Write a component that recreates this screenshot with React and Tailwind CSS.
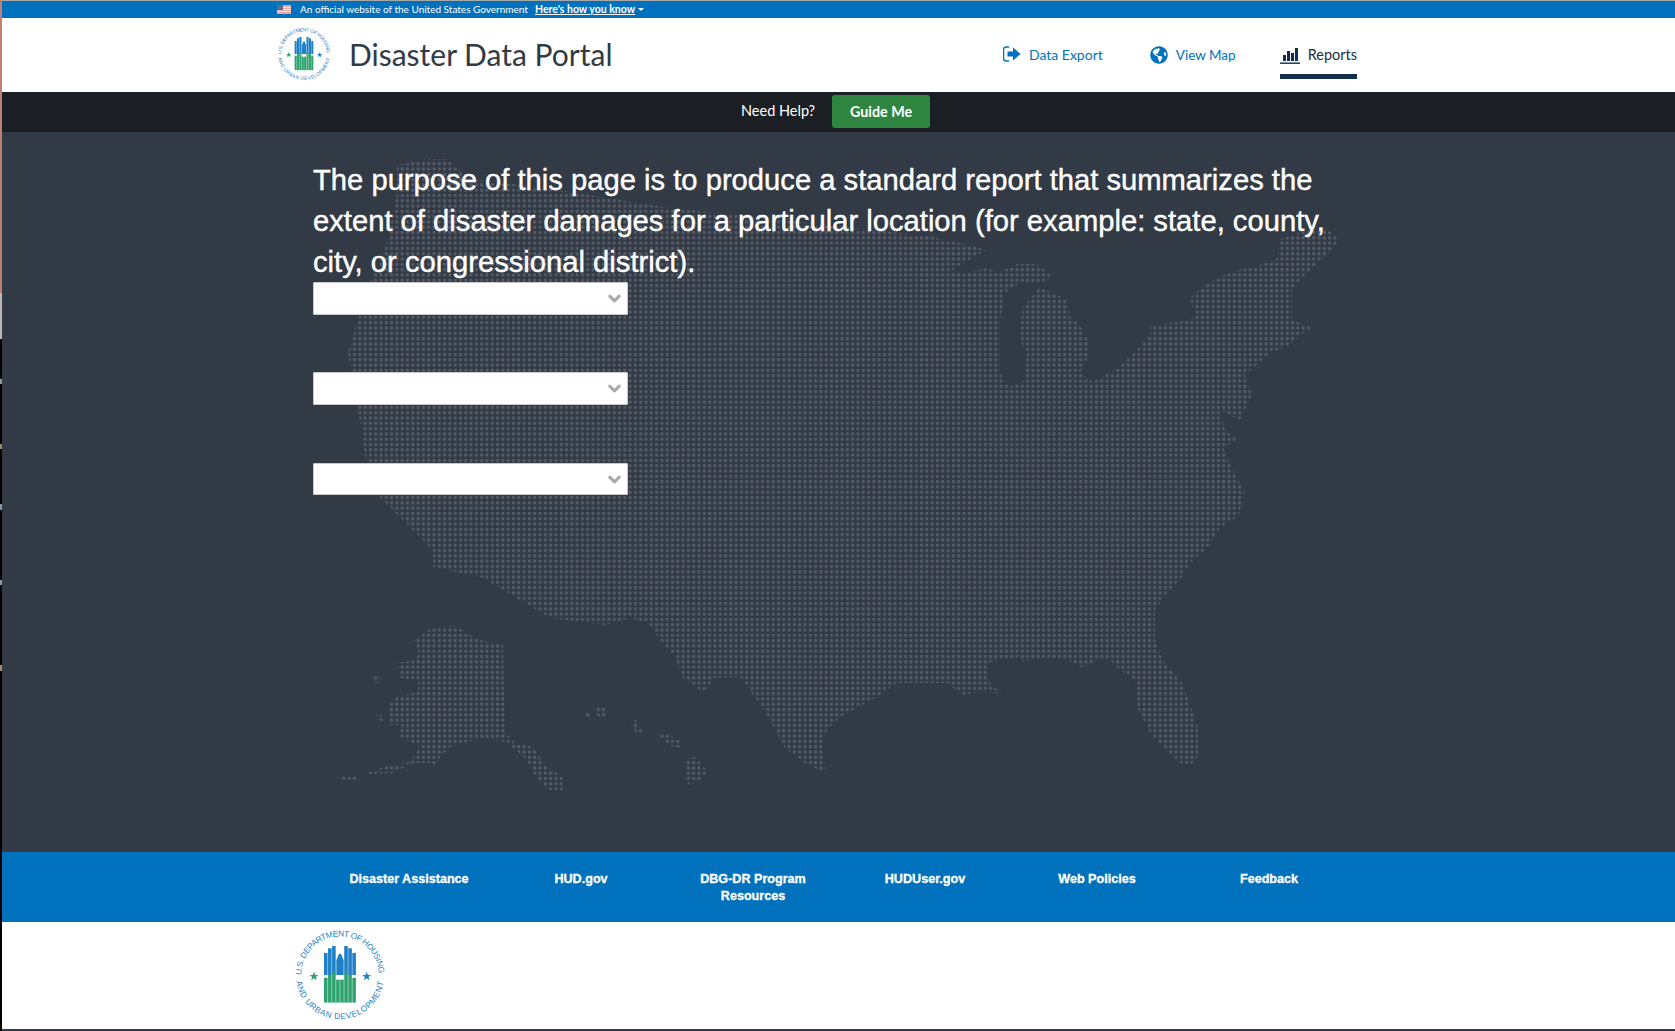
import React from 'react';
import { ChevronDown } from 'lucide-react';
import { FaGlobeAmericas } from 'react-icons/fa';

const footerLinks = [
  ['Disaster Assistance'],
  ['HUD.gov'],
  ['DBG-DR Program', 'Resources'],
  ['HUDUser.gov'],
  ['Web Policies'],
  ['Feedback'],
];

// outline of the dotted map, in page coordinates
const usOutline =
  'M397 165 L430 159 L447 159 L460 170 L472 179 L560 190 L663 207 L800 222 L929 236 L945 240 L960 243 L987 250 L965 262 L950 272 L965 274 L985 268 L1000 272 L1017 264 L1037 264 L1053 277 L1040 283 L1020 283 L1005 293 L1000 320 L1000 373 L1010 387 L1025 380 L1027 353 L1018 337 L1023 307 L1040 287 L1068 300 L1070 317 L1078 323 L1088 340 L1090 353 L1080 373 L1093 382 L1115 370 L1135 352 L1150 335 L1150 325 L1155 325 L1190 320 L1195 315 L1190 298 L1205 285 L1230 272 L1260 265 L1278 258 L1278 240 L1300 232 L1325 228 L1340 240 L1330 252 L1316 265 L1300 280 L1292 290 L1292 320 L1305 325 L1312 328 L1300 335 L1290 345 L1270 353 L1245 375 L1252 395 L1245 410 L1240 420 L1220 410 L1225 430 L1238 440 L1223 447 L1233 470 L1245 493 L1238 517 L1220 527 L1208 547 L1190 563 L1182 577 L1167 593 L1155 610 L1155 640 L1163 660 L1182 683 L1192 710 L1198 727 L1198 757 L1190 765 L1178 762 L1163 747 L1150 733 L1137 707 L1135 680 L1120 670 L1110 660 L1097 660 L1083 668 L1067 660 L1047 657 L1023 662 L1020 657 L990 662 L987 673 L992 687 L1002 690 L997 693 L977 692 L963 695 L955 690 L948 683 L920 683 L897 683 L877 697 L840 717 L827 730 L822 743 L826 773 L806 764 L785 748 L764 710 L740 677 L715 678 L703 693 L697 688 L682 677 L675 657 L660 640 L648 623 L630 618 L605 625 L550 618 L520 600 L503 590 L480 577 L433 567 L433 550 L400 517 L380 497 L365 457 L362 430 L357 407 L348 353 L358 320 L372 277 L387 243 L397 193 Z';
const alaskaOutline =
  'M428 630 L453 625 L465 632 L480 640 L503 645 L505 733 L515 743 L533 747 L547 767 L563 777 L563 790 L547 790 L533 773 L527 760 L507 742 L483 738 L467 742 L450 747 L440 757 L437 767 L430 763 L413 763 L393 773 L368 774 L368 772 L387 766 L410 762 L420 747 L407 740 L398 737 L402 725 L390 725 L387 707 L395 697 L418 692 L418 680 L400 678 L397 663 L417 660 L418 650 L413 640 Z';
const islandsOutline =
  'M340 775 L357 775 L357 780 L340 780 Z M371 675 L380 677 L380 684 L373 682 Z M376 714 L385 716 L385 722 L378 720 Z M586 713 L591 713 L591 718 L586 718 Z M597 708 L607 707 L607 716 L597 716 Z M630 722 L636 720 L643 733 L636 733 Z M656 734 L668 735 L681 740 L680 748 L670 746 Z M684 760 L695 757 L708 772 L700 780 L688 785 Z';

function UsMap() {
  return (
    <svg className="absolute top-0 -left-[2px] h-[720px] w-[1675px]" viewBox="0 132 1675 720">
      <defs>
        <pattern id="dots" x="3.2" y="3.1" width="5.3" height="5.3" patternUnits="userSpaceOnUse">
          <rect width="3" height="3" rx="0.6" fill="#555b66" />
        </pattern>
      </defs>
      <path d={usOutline} fill="url(#dots)" />
      <path d={alaskaOutline} fill="url(#dots)" />
      <path d={islandsOutline} fill="url(#dots)" />
    </svg>
  );
}

const blueBars = [
  [32.6, 26],
  [37, 21],
  [41.4, 18.5],
  [54.6, 18.5],
  [59, 21],
  [63.4, 26],
];
const greenBars = [
  [32.6, 53],
  [37, 50],
  [41.4, 47],
  [45.8, 55],
  [50.2, 55],
  [54.6, 47],
  [59, 50],
  [63.4, 53],
];

function HudLogo({ className, id }) {
  return (
    <svg className={className} viewBox="0 0 100 100">
      <defs>
        <path id={`${id}-top`} d="M8 50 A42 42 0 0 1 92 50" />
        <path id={`${id}-bottom`} d="M2 50 A48 48 0 0 0 98 50" />
      </defs>
      <g fill="#1f80c8" fontFamily="Liberation Sans, sans-serif" fontSize="9">
        <text>
          <textPath href={`#${id}-top`} textLength="130" lengthAdjust="spacing">
            U.S. DEPARTMENT OF HOUSING
          </textPath>
        </text>
        <text>
          <textPath href={`#${id}-bottom`} startOffset="7" textLength="136" lengthAdjust="spacing">
            AND URBAN DEVELOPMENT
          </textPath>
        </text>
      </g>
      {blueBars.map(([x, y]) => (
        <rect key={x} x={x} y={y} width="3.9" height={50 - y} fill="#1f80c8" />
      ))}
      <path d="M46 50 L46 34 L49 27 L51 27 L54 34 L54 50 Z" fill="#1f80c8" />
      {greenBars.map(([x, y]) => (
        <rect key={x} x={x} y={y} width="3.9" height={80 - y} fill="#2ea36f" />
      ))}
      <path d="M21.7 46.5 L23 50 L26.6 50 L23.7 52.2 L24.8 55.8 L21.7 53.6 L18.6 55.8 L19.7 52.2 L16.8 50 L20.4 50 Z" fill="#2ea36f" />
      <path d="M79 46.5 L80.3 50 L83.9 50 L81 52.2 L82.1 55.8 L79 53.6 L75.9 55.8 L77 52.2 L74.1 50 L77.7 50 Z" fill="#1f80c8" />
    </svg>
  );
}

function SelectBox({ className }) {
  return (
    <div className={`relative w-[315px] ${className}`}>
      <select className="h-full w-full appearance-none rounded-[1px] border border-[#c9c9c9] bg-white" />
      <ChevronDown className="absolute top-[7px] right-[4px] h-[19px] w-[19px] text-[#a9a9a9]" strokeWidth={3.8} />
    </div>
  );
}

export default function App() {
  return (
    <div className="flex h-[1031px] w-[1675px] overflow-hidden bg-black font-['Lato',sans-serif]">
      {/* stray strip at the window edge */}
      <div className="flex w-[2px] shrink-0 flex-col">
        <div className="h-[293px] bg-[#bd8074]" />
        <div className="h-[46px] bg-[#b9b9b9]" />
        <div className="mt-[40px] h-[5px] bg-[#8a9aa8]" />
        <div className="mt-[60px] h-[5px] bg-[#9b8a6a]" />
        <div className="mt-[55px] h-[6px] bg-[#7f97ad]" />
        <div className="mt-[70px] h-[5px] bg-[#8a9aa8]" />
        <div className="mt-[80px] h-[6px] bg-[#a08a70]" />
      </div>

      <div className="flex min-w-0 flex-1 flex-col">
        <div className="h-[1px] bg-[#a8a8a8]" />
        {/* gov banner */}
        <div className="flex h-[17px] items-center bg-[#0071bc] pl-[275px] text-[10px] whitespace-nowrap text-white">
          <svg className="h-[9px] w-[14px]" viewBox="0 0 14 9">
            <rect width="14" height="9" fill="#e8a79d" />
            <rect y="2" width="14" height="1" fill="#f6eeee" />
            <rect y="4" width="14" height="1" fill="#f6eeee" />
            <rect y="6" width="14" height="1" fill="#f6eeee" />
            <rect width="6" height="5" fill="#5a6c96" />
          </svg>
          <span className="ml-[9px] w-[235px]">An official website of the United States Government</span>
          <span className="text-[10.5px] font-bold underline">Here's how you know</span>
          <span className="mt-[-1px] ml-[3px] border-x-[3px] border-t-[3px] border-x-transparent border-t-white" />
        </div>

        {/* header */}
        <header className="flex h-[74px] bg-white pl-[275px]">
          <HudLogo id="head" className="mt-[9px] h-[54px] w-[54px]" />
          <h1 className="mt-[16px] ml-[18px] text-[30px] leading-[40px] text-[#323a45]">Disaster Data Portal</h1>
          <nav className="ml-auto flex pr-[318px] text-[14px] text-[#0071bc]">
            <a className="mt-[26px] flex h-[20px] items-center gap-[8px]">
              <svg className="h-[16px] w-[18px]" viewBox="0 0 18 16" fill="#0071bc">
                <path d="M6 1 H3 A2.5 2.5 0 0 0 .5 3.5 V12.5 A2.5 2.5 0 0 0 3 15 H6" fill="none" stroke="#0071bc" strokeWidth="1.5" />
                <path d="M4.5 5.5 H10 V1.5 L17.5 8 L10 14.5 V10.5 H4.5 Z" />
              </svg>
              Data Export
            </a>
            <a className="mt-[27px] ml-[47px] flex h-[20px] items-center gap-[8px] text-[13.5px]">
              <FaGlobeAmericas className="h-[18px] w-[18px]" />
              View Map
            </a>
            <a className="ml-[44px] flex h-[61px] flex-col border-b-[5px] border-[#112e51] text-[14.5px] text-[#212d45]">
              <span className="mt-[27px] flex h-[20px] items-center gap-[8px]">
                <svg className="h-[17px] w-[20px]" viewBox="0 0 20 17" fill="#112e51">
                  <rect x="3" y="8" width="3" height="6" />
                  <rect x="7" y="4" width="3" height="10" />
                  <rect x="11" y="6" width="3" height="8" />
                  <rect x="15" y="1" width="3" height="13" />
                  <rect x="0" y="15.5" width="20" height="1.4" />
                </svg>
                Reports
              </span>
            </a>
          </nav>
        </header>

        {/* help bar */}
        <div className="flex h-[40px] items-start bg-[#1b1e23] pl-[739px] text-white">
          <span className="mt-[10px] text-[14.5px] leading-[18px]">Need Help?</span>
          <button className="mt-[3px] ml-[17px] h-[33px] w-[98px] rounded-[3px] bg-[#2e8540] text-[14.3px] font-bold">Guide Me</button>
        </div>

        {/* main */}
        <main className="relative h-[720px] bg-[#323a45] pt-[28px] pl-[311px]">
          <UsMap />
          <div className="relative">
            <p className="mb-[-1px] w-[1040px] font-['Liberation_Sans',sans-serif] text-[29.2px] leading-[41px] text-white [-webkit-text-stroke:0.4px_white]">
              The purpose of this page is to produce a standard report that summarizes the extent of disaster damages for a particular location (for example: state, county, city, or congressional district).
            </p>
            <SelectBox className="mb-[57px] h-[33px]" />
            <SelectBox className="mb-[58px] h-[33px]" />
            <SelectBox className="h-[32px]" />
          </div>
        </main>

        {/* footer links */}
        <div className="grid h-[70px] grid-cols-[repeat(6,172px)] bg-[#0071bc] pt-[19px] pl-[321px] text-center font-['Liberation_Sans',sans-serif] text-[12.6px] leading-[17px] font-bold text-white [-webkit-text-stroke:0.3px_white]">
          {footerLinks.map((lines) => (
            <a key={lines[0]} className="block">
              {lines.map((line) => (
                <div key={line}>{line}</div>
              ))}
            </a>
          ))}
        </div>

        <div className="flex-1 bg-white pt-[7px] pl-[292px]">
          <HudLogo id="foot" className="h-[92px] w-[92px]" />
        </div>
        <div className="h-[2px] bg-[#323a45]" />
      </div>
    </div>
  );
}
